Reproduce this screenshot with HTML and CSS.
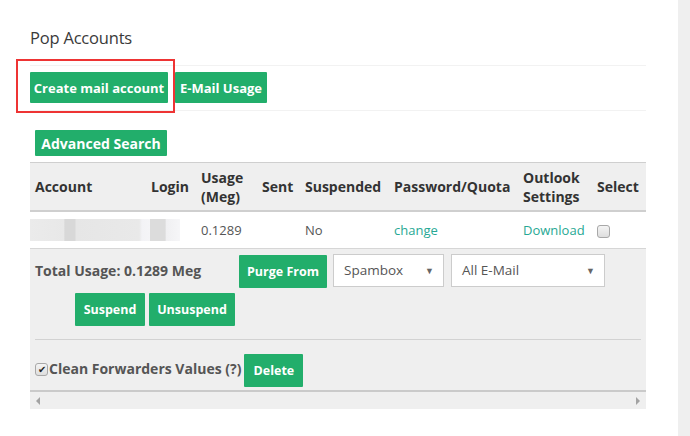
FILE: index.html
```html
<!DOCTYPE html>
<html lang="en">
<head>
    <meta charset="UTF-8">
    <title>Pop Accounts</title>
    <link rel="stylesheet" href="styles.css">
</head>
<body>
    <div class="page">
        <div class="main">
            <h2 class="title">Pop Accounts</h2>

            <div class="toolbar">
                <button class="btn">Create mail account</button>
                <button class="btn">E-Mail Usage</button>
                <!-- highlight drawn over the first button -->
                <div class="highlight"></div>
            </div>

            <div class="search-row">
                <button class="btn btn-lg">Advanced Search</button>
            </div>

            <div class="table-wrap">
                <table class="accounts">
                    <colgroup>
                        <col style="width:116px">
                        <col style="width:50px">
                        <col style="width:61px">
                        <col style="width:43px">
                        <col style="width:89px">
                        <col style="width:129px">
                        <col style="width:74px">
                        <col>
                    </colgroup>
                    <thead>
                        <tr>
                            <th>Account</th>
                            <th>Login</th>
                            <th>Usage<br>(Meg)</th>
                            <th>Sent</th>
                            <th>Suspended</th>
                            <th>Password/Quota</th>
                            <th>Outlook<br>Settings</th>
                            <th>Select</th>
                        </tr>
                    </thead>
                    <tbody>
                        <tr>
                            <td class="blur-cell"><span class="blur blur-account"></span></td>
                            <td class="blur-cell"><span class="blur blur-login"></span></td>
                            <td>0.1289</td>
                            <td></td>
                            <td>No</td>
                            <td><a href="#">change</a></td>
                            <td><a href="#">Download</a></td>
                            <td><span class="check"></span></td>
                        </tr>
                    </tbody>
                </table>

                <div class="footer">
                    <div class="footer-row">
                        <span class="total">Total Usage: 0.1289 Meg</span>
                        <button class="btn btn-md purge">Purge From</button>
                        <div class="select sel-box">Spambox<span class="caret">&#9660;</span></div>
                        <div class="select sel-mail">All E-Mail<span class="caret">&#9660;</span></div>
                    </div>
                    <div class="footer-row suspend-row">
                        <button class="btn btn-md suspend">Suspend</button>
                        <button class="btn btn-md unsuspend">Unsuspend</button>
                    </div>
                    <hr class="sep">
                    <div class="footer-row clean-row">
                        <span class="check checked">&#10004;</span>
                        <span class="clean">Clean Forwarders Values (?)</span>
                        <button class="btn btn-md">Delete</button>
                    </div>
                </div>

                <div class="hscroll">
                    <span class="arrow-left"></span>
                    <span class="arrow-right"></span>
                </div>
            </div>
        </div>
        <div class="side"></div>
    </div>
</body>
</html>
```

FILE: styles.css
```css
body {
    margin: 0;
    font-family: 'Open Sans', sans-serif;
    background: #fff;
    color: #333;
}

.page {
    display: flex;
    height: 436px;
}

.main {
    width: 616px;
    padding-left: 30px;
    padding-right: 32px;
}

.side {
    flex: 1;
    background: #efefef;
}

.title {
    margin: 0;
    padding-top: 28px;
    height: 66px;
    box-sizing: border-box;
    font-size: 16.5px;
    line-height: 20px;
    font-weight: 400;
    color: #3a3a3a;
    border-bottom: 1px solid #f2f2f2;
    letter-spacing: -0.2px;
}

.btn {
    background: #22ae6b;
    color: #fff;
    border: none;
    border-radius: 1px;
    font-family: 'Open Sans', sans-serif;
    font-weight: 700;
    font-size: 12.5px;
    height: 31px;
    padding: 0 6px;
    white-space: nowrap;
    cursor: pointer;
}

.toolbar {
    position: relative;
    display: flex;
    gap: 7px;
    padding-top: 6px;
    height: 45px;
    box-sizing: border-box;
    border-bottom: 1px solid #f2f2f2;
}

.toolbar .btn {
    font-size: 13px;
    padding: 0;
}

.toolbar .btn:first-child {
    width: 138px;
}

.toolbar .btn:nth-child(2) {
    width: 92px;
}

.highlight {
    position: absolute;
    left: -14px;
    top: -7px;
    width: 159px;
    height: 54px;
    border: 2px solid #ee3434;
    box-sizing: border-box;
}

.search-row {
    padding: 19px 0 6px 5px;
}

.btn-lg {
    font-size: 14px;
    height: 26px;
    width: 132px;
    padding: 0;
}

.accounts {
    width: 616px;
    table-layout: fixed;
    border-collapse: collapse;
}

.accounts th {
    background: #efefef;
    border-top: 1px solid #cfcfcf;
    border-bottom: 2px solid #cfcfcf;
    height: 47px;
    padding: 0 0 0 5px;
    text-align: left;
    font-size: 14px;
    font-weight: 700;
    line-height: 19px;
    color: #333;
    white-space: nowrap;
}

.accounts td {
    height: 36px;
    padding: 0 0 0 5px;
    font-size: 13px;
    color: #555;
    border-bottom: 1px solid #d6d6d6;
    white-space: nowrap;
}

.accounts td.blur-cell {
    padding: 0;
}

.accounts a {
    color: #27a894;
    text-decoration: none;
}

.blur {
    display: block;
    height: 22px;
}

.blur-account {
    margin-left: 0;
    width: 140px;
    background: linear-gradient(90deg, #ebebeb 0, #e8e8e8 24%, #d8d8d8 25%, #d8d8d8 32%, #e6e6e6 33%, #e9e9e9 78%, #f3f3f6 80%, #f6f6f8 90%, #fdfdfd 100%);
}

.blur-login {
    margin-left: 4px;
    width: 30px;
    background: linear-gradient(90deg, #dcdcdc 0, #dcdcdc 50%, #f0f0f2 55%, #f6f6f8 100%);
}

.check {
    display: inline-block;
    width: 11px;
    height: 11px;
    border: 1px solid #a8a8a8;
    border-radius: 3px;
    background: linear-gradient(#f4f4f4, #dedede);
    vertical-align: middle;
    margin-left: 0;
}

.footer {
    background: #efefef;
    padding: 4px 5px 0 5px;
    height: 141px;
    box-sizing: border-box;
}

.footer-row {
    display: flex;
    align-items: center;
}

.total {
    font-size: 14px;
    font-weight: 700;
    color: #555;
    width: 204px;
    align-self: flex-start;
    padding-top: 8px;
}

.btn-md {
    height: 33px;
    font-size: 12.5px;
    padding: 0 9px;
}

.purge {
    margin-top: 2px;
    width: 88px;
    padding: 0;
}

.select {
    position: relative;
    background: #fff;
    border: 1px solid #ccc;
    height: 33px;
    box-sizing: border-box;
    font-size: 13.5px;
    color: #555;
    line-height: 31px;
    padding-left: 10px;
    margin-left: 6px;
}

.sel-box {
    width: 111px;
}

.sel-mail {
    width: 154px;
    margin-left: 7px;
}

.caret {
    position: absolute;
    right: 9px;
    top: 0;
    font-size: 9px;
    color: #666;
}

.suspend-row {
    padding-left: 40px;
    gap: 4px;
    margin-top: 5px;
}

.suspend {
    width: 70px;
    padding: 0;
}

.unsuspend {
    width: 86px;
    padding: 0;
}

.sep {
    border: none;
    border-top: 1px solid #d2d2d2;
    margin: 13px 0 0 0;
    width: 606px;
}

.clean-row {
    margin-top: 14px;
}

.check.checked {
    font-size: 10px;
    line-height: 11px;
    text-align: center;
    color: #222;
    margin-bottom: 3px;
}

.clean {
    font-size: 14px;
    font-weight: 700;
    color: #555;
    margin-left: 1px;
    margin-right: 3px;
    margin-bottom: 4px;
}

.clean-row .btn {
    width: 59px;
}

.hscroll {
    position: relative;
    height: 17px;
    background: #efefef;
    border-top: 2px solid #cacaca;
}

.arrow-left,
.arrow-right {
    position: absolute;
    top: 5px;
    width: 0;
    height: 0;
    border-top: 4px solid transparent;
    border-bottom: 4px solid transparent;
}

.arrow-left {
    left: 6px;
    border-right: 4px solid #a3a3a3;
}

.arrow-right {
    right: 6px;
    border-left: 4px solid #a3a3a3;
}
```
